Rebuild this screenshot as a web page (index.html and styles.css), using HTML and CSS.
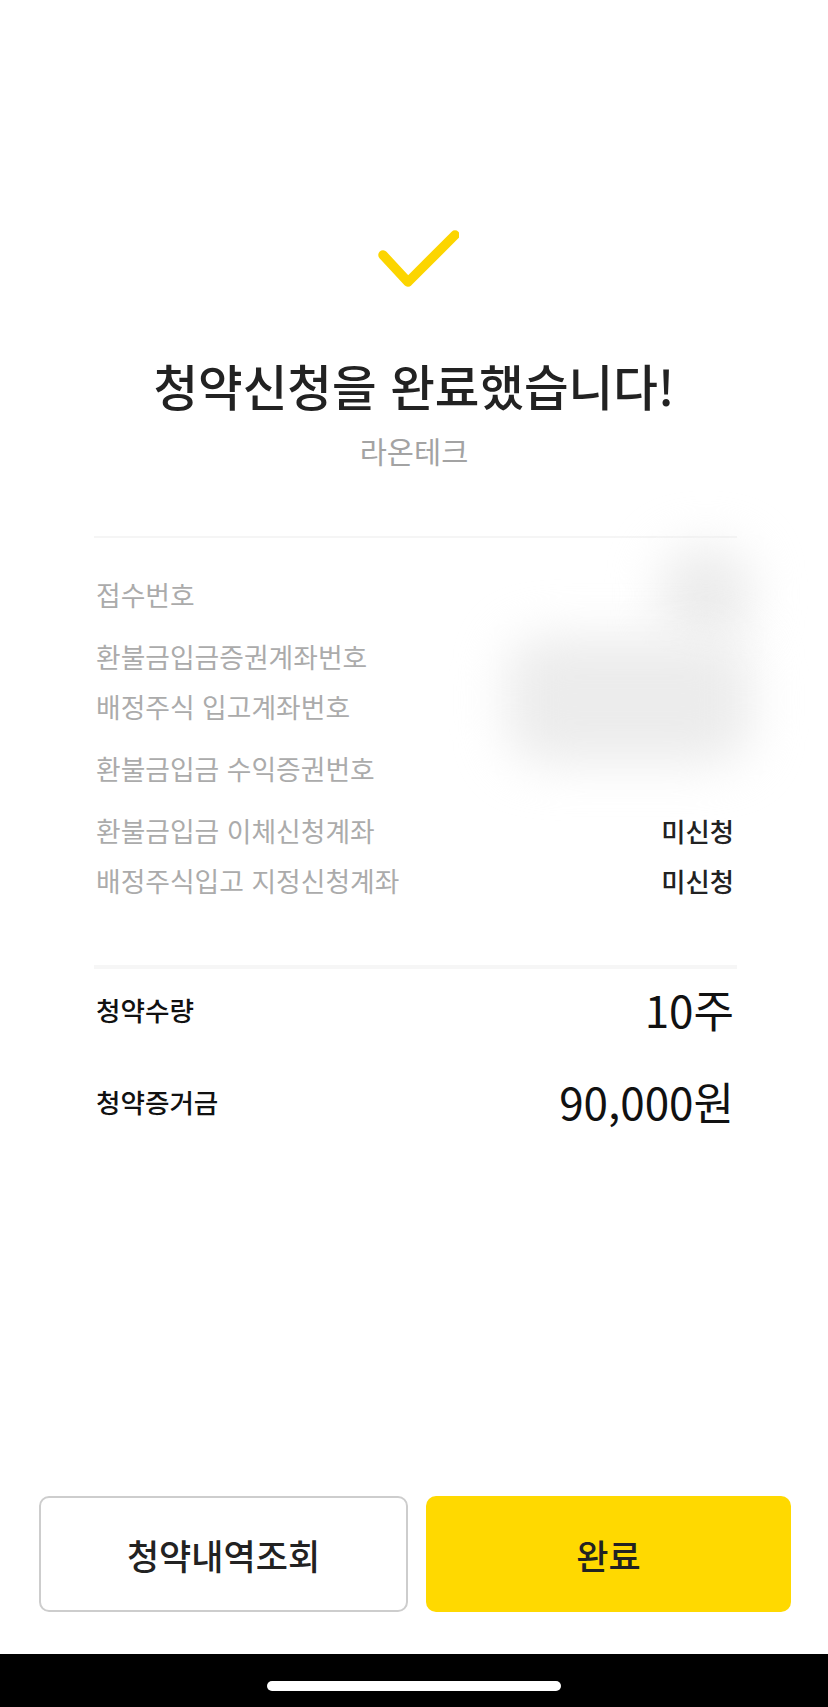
FILE: index.html
```html
<!DOCTYPE html>
<html lang="ko">
<head>
    <meta charset="UTF-8">
    <meta name="viewport" content="width=device-width, initial-scale=1.0">
    <title>청약신청 완료</title>
    <link rel="stylesheet" href="styles.css">
</head>
<body>
    <div class="page">
        <div class="result">
            <svg class="check-icon" width="90" height="70" viewBox="0 0 90 70">
                <path d="M14 30 L39 57 L86 10" fill="none" stroke="#fcd500" stroke-width="9.5" stroke-linecap="round" stroke-linejoin="round"/>
            </svg>
            <h1 class="result-title">청약신청을 완료했습니다!</h1>
            <p class="result-name">라온테크</p>
        </div>

        <div class="info">
            <div class="info-group">
                <div class="info-row"><span class="info-label">접수번호</span></div>
            </div>
            <div class="info-group">
                <div class="info-row"><span class="info-label">환불금입금증권계좌번호</span></div>
                <div class="info-row"><span class="info-label">배정주식 입고계좌번호</span></div>
            </div>
            <div class="info-group">
                <div class="info-row"><span class="info-label">환불금입금 수익증권번호</span></div>
            </div>
            <div class="info-group">
                <div class="info-row">
                    <span class="info-label">환불금입금 이체신청계좌</span>
                    <span class="info-value">미신청</span>
                </div>
                <div class="info-row">
                    <span class="info-label">배정주식입고 지정신청계좌</span>
                    <span class="info-value">미신청</span>
                </div>
            </div>

            <!-- 가려진 계좌정보 -->
            <div class="mask mask-top"></div>
            <div class="mask mask-bottom"></div>
        </div>

        <div class="summary">
            <div class="summary-row">
                <span class="summary-label">청약수량</span>
                <span class="summary-value">10주</span>
            </div>
            <div class="summary-row">
                <span class="summary-label">청약증거금</span>
                <span class="summary-value">90,000원</span>
            </div>
        </div>

        <div class="spacer"></div>

        <div class="actions">
            <button class="btn btn-outline">청약내역조회</button>
            <button class="btn btn-primary">완료</button>
        </div>

        <div class="home-bar">
            <span class="home-indicator"></span>
        </div>
    </div>
</body>
</html>
```

FILE: styles.css
```css
* {
    box-sizing: border-box;
}

html, body {
    margin: 0;
    padding: 0;
    background: #fff;
}

body {
    font-family: "Noto Sans CJK KR", "Noto Sans", sans-serif;
    color: #222;
}

.page {
    display: flex;
    flex-direction: column;
    min-height: 100vh;
}

.result {
    display: flex;
    flex-direction: column;
    align-items: center;
    padding-top: 225px;
}

.check-icon {
    display: block;
}

.result-title {
    margin: 60px 0 0;
    font-size: 48.5px;
    line-height: 60px;
    font-weight: 500;
    color: #222;
}

.result-name {
    margin: 16px 0 0;
    font-size: 29.5px;
    line-height: 38px;
    color: #a3a3a3;
}

.info {
    position: relative;
    margin: 67px 91px 0 94px;
    padding: 31px 0 60px;
    border-top: 2px solid #f5f5f5;
    display: flex;
    flex-direction: column;
    gap: 12px;
}

.info-row {
    display: flex;
    justify-content: space-between;
    align-items: center;
    height: 50px;
}

.info-label {
    font-size: 26.8px;
    color: #ababab;
    padding-left: 2px;
}

.info-value {
    font-size: 26.4px;
    font-weight: 500;
    color: #222;
    padding-right: 3px;
}

.mask {
    position: absolute;
    background: #ececec;
    filter: blur(24px);
    border-radius: 40px;
}

.mask-top {
    left: 566px;
    top: 8px;
    width: 92px;
    height: 96px;
}

.mask-bottom {
    left: 412px;
    top: 98px;
    width: 246px;
    height: 128px;
}

.summary {
    margin: 0 91px 0 94px;
    border-top: 4px solid #f6f6f6;
    display: flex;
    flex-direction: column;
    gap: 12px;
}

.summary-row {
    display: flex;
    justify-content: space-between;
    align-items: center;
    height: 80px;
}

.summary-label {
    font-size: 26.6px;
    font-weight: 500;
    color: #111;
    padding-left: 2px;
}

.summary-value {
    font-size: 44px;
    color: #111;
    padding-right: 3px;
}

.spacer {
    flex: 1;
}

.actions {
    display: flex;
    gap: 18px;
    padding: 0 37px 42px 39px;
}

.btn {
    flex: 1;
    height: 116px;
    border-radius: 10px;
    font-family: inherit;
    font-size: 35px;
    font-weight: 500;
    color: #222;
    cursor: pointer;
}

.btn-outline {
    background: #fff;
    border: 2px solid #cdcdcd;
}

.btn-primary {
    background: #ffd900;
    border: none;
}

.home-bar {
    height: 53px;
    background: #000;
    display: flex;
    justify-content: center;
    padding-top: 27px;
}

.home-indicator {
    width: 294px;
    height: 10px;
    border-radius: 5px;
    background: #fff;
}
```
